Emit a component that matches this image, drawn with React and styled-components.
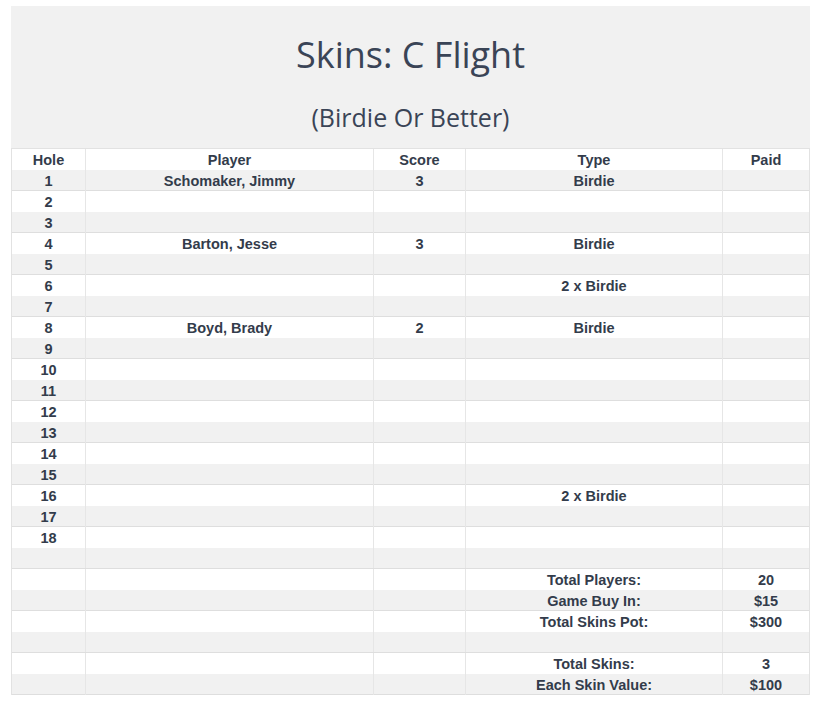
import styled, { createGlobalStyle } from "styled-components";

const Global = createGlobalStyle`
  body {
    margin: 0;
    background: #fff;
    font-family: "Liberation Sans", Arial, sans-serif;
  }
`;

const Page = styled.div`
  padding: 6px 12px 0 11px;
`;

const Header = styled.div`
  background: #f1f1f1;
  height: 142px;
  display: flex;
  flex-direction: column;
  align-items: center;
  color: #3a4456;
  font-family: "Open Sans", sans-serif;
`;

const Title = styled.h1`
  margin: 26px 0 0;
  font-size: 36px;
  font-weight: 400;
  line-height: 46px;
`;

const Subtitle = styled.h2`
  margin: 23px 0 0;
  font-size: 25px;
  font-weight: 400;
  line-height: 32px;
`;

const Table = styled.div`
  border-left: 1px solid #e2e2e2;
  border-right: 1px solid #e2e2e2;
  border-top: 1px solid #e2e2e2;
`;

const Row = styled.div`
  display: grid;
  grid-template-columns: 73px 288px 92px 257px 1fr;
  height: 21px;
  box-sizing: border-box;
  background: ${p => (p.$shaded ? "#f1f1f1" : "#fff")};
  border-bottom: ${p => (p.$shaded ? "1px solid #dedede" : "none")};
`;

const Cell = styled.div`
  border-left: 1px solid #e6e6e6;
  text-align: center;
  font-size: 14.5px;
  font-weight: 700;
  color: #333c4b;
  line-height: 22px;
  &:first-child {
    border-left: none;
  }
`;

const holes = {
  1: ["Schomaker, Jimmy", "3", "Birdie"],
  4: ["Barton, Jesse", "3", "Birdie"],
  6: ["", "", "2 x Birdie"],
  8: ["Boyd, Brady", "2", "Birdie"],
  16: ["", "", "2 x Birdie"],
};

const rows = [
  ["Hole", "Player", "Score", "Type", "Paid"],
  ...Array.from({ length: 18 }, (_, i) => {
    const h = holes[i + 1] || ["", "", ""];
    return [String(i + 1), h[0], h[1], h[2], ""];
  }),
  ["", "", "", "", ""],
  ["", "", "", "Total Players:", "20"],
  ["", "", "", "Game Buy In:", "$15"],
  ["", "", "", "Total Skins Pot:", "$300"],
  ["", "", "", "", ""],
  ["", "", "", "Total Skins:", "3"],
  ["", "", "", "Each Skin Value:", "$100"],
];

const App = () => (
  <Page>
    <Global />
    <Header>
      <Title>Skins: C Flight</Title>
      <Subtitle>(Birdie Or Better)</Subtitle>
    </Header>
    <Table>
      {rows.map((r, i) => (
        <Row key={i} $shaded={i % 2 === 1}>
          {r.map((c, j) => (
            <Cell key={j}>{c}</Cell>
          ))}
        </Row>
      ))}
    </Table>
  </Page>
);

export default App;
